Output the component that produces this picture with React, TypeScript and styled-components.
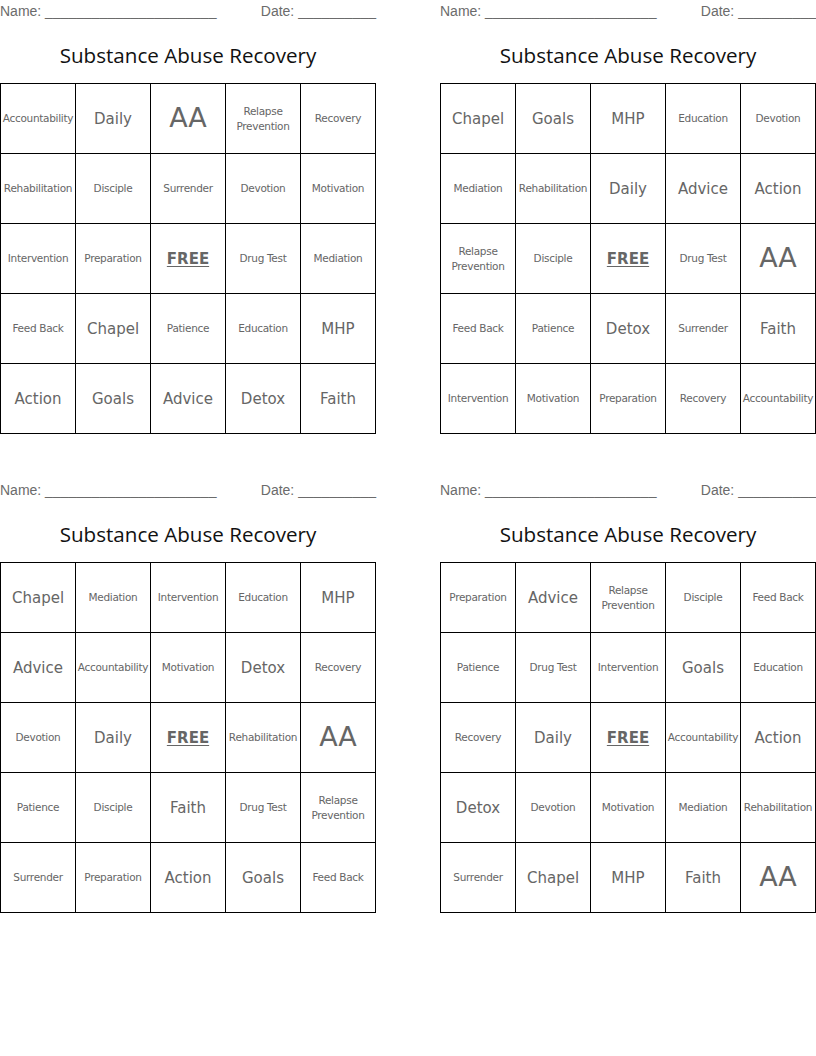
import React from "react";
import styled, { createGlobalStyle } from "styled-components";

const Global = createGlobalStyle`
  html, body { margin: 0; padding: 0; background: #fff; }
`;

const Page = styled.div`
  display: grid;
  grid-template-columns: 376px 376px;
  column-gap: 64px;
  row-gap: 45px;
  width: 816px;
`;

const Card = styled.section`
  display: flex;
  flex-direction: column;
`;

const InfoRow = styled.div`
  display: flex;
  justify-content: space-between;
  width: 376px;
  height: 22px;
  font-family: "Liberation Sans", Arial, sans-serif;
  font-size: 14px;
  color: #6b6b6b;
  line-height: 22px;
  white-space: nowrap;
`;

const Title = styled.h1`
  margin: 0;
  height: 61px;
  line-height: 66px;
  text-align: center;
  font-family: "Open Sans", sans-serif;
  font-weight: 400;
  font-size: 20.6px;
  color: #111;
`;

const Board = styled.div`
  display: grid;
  grid-template-columns: repeat(5, 75px);
  grid-auto-rows: 70px;
  border-top: 1px solid #000;
  border-left: 1px solid #000;
  width: fit-content;
`;

type Size = "s" | "m" | "l" | "free";

const Cell = styled.div<{ $size: Size }>`
  display: flex;
  align-items: center;
  justify-content: center;
  text-align: center;
  border-right: 1px solid #000;
  border-bottom: 1px solid #000;
  font-family: "DejaVu Sans", Verdana, sans-serif;
  color: #666;
  white-space: pre-line;
  letter-spacing: ${(p) => (p.$size === "s" ? "-0.3px" : "0")};
  font-size: ${(p) =>
    p.$size === "l" ? "27px" : p.$size === "m" ? "15px" : p.$size === "free" ? "15px" : "10.5px"};
  line-height: ${(p) => (p.$size === "s" ? "15px" : "1.2")};
  font-weight: ${(p) => (p.$size === "free" ? 700 : 400)};
  text-decoration: ${(p) => (p.$size === "free" ? "underline" : "none")};
  text-underline-offset: 2px;
`;

const sizeOf = (w: string): Size => {
  if (w === "FREE") return "free";
  if (w === "AA") return "l";
  if (w.length <= 6) return "m";
  return "s";
};

const RP = "Relapse\nPrevention";

const cards: string[][] = [
  [
    "Accountability", "Daily", "AA", RP, "Recovery",
    "Rehabilitation", "Disciple", "Surrender", "Devotion", "Motivation",
    "Intervention", "Preparation", "FREE", "Drug Test", "Mediation",
    "Feed Back", "Chapel", "Patience", "Education", "MHP",
    "Action", "Goals", "Advice", "Detox", "Faith",
  ],
  [
    "Chapel", "Goals", "MHP", "Education", "Devotion",
    "Mediation", "Rehabilitation", "Daily", "Advice", "Action",
    RP, "Disciple", "FREE", "Drug Test", "AA",
    "Feed Back", "Patience", "Detox", "Surrender", "Faith",
    "Intervention", "Motivation", "Preparation", "Recovery", "Accountability",
  ],
  [
    "Chapel", "Mediation", "Intervention", "Education", "MHP",
    "Advice", "Accountability", "Motivation", "Detox", "Recovery",
    "Devotion", "Daily", "FREE", "Rehabilitation", "AA",
    "Patience", "Disciple", "Faith", "Drug Test", RP,
    "Surrender", "Preparation", "Action", "Goals", "Feed Back",
  ],
  [
    "Preparation", "Advice", RP, "Disciple", "Feed Back",
    "Patience", "Drug Test", "Intervention", "Goals", "Education",
    "Recovery", "Daily", "FREE", "Accountability", "Action",
    "Detox", "Devotion", "Motivation", "Mediation", "Rehabilitation",
    "Surrender", "Chapel", "MHP", "Faith", "AA",
  ],
];

export default function App() {
  return (
    <>
      <Global />
      <Page>
        {cards.map((words, i) => (
          <Card key={i}>
            <InfoRow>
              <span>Name: ______________________</span>
              <span>Date: __________</span>
            </InfoRow>
            <Title>Substance Abuse Recovery</Title>
            <Board>
              {words.map((w, j) => (
                <Cell key={j} $size={sizeOf(w)}>
                  {w}
                </Cell>
              ))}
            </Board>
          </Card>
        ))}
      </Page>
    </>
  );
}
